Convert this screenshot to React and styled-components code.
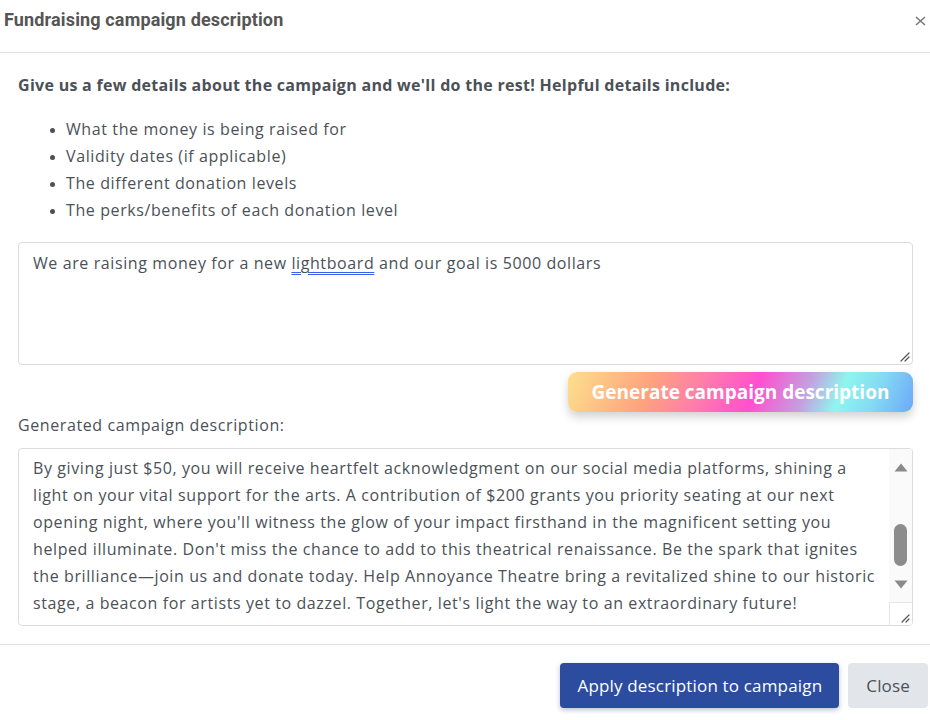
import React from "react";
import styled, { createGlobalStyle } from "styled-components";

const Global = createGlobalStyle`
  html, body { margin: 0; padding: 0; background: #fff; }
  body { font-family: "Open Sans", "Noto Sans", sans-serif; color: #4b5157; }
`;

const Modal = styled.div`
  width: 930px;
  height: 720px;
  background: #fff;
  display: flex;
  flex-direction: column;
  overflow: hidden;
`;

const Header = styled.div`
  display: flex;
  justify-content: space-between;
  align-items: flex-start;
  height: 53px;
  box-sizing: border-box;
  padding: 8px 3px 0 4px;
  border-bottom: 1px solid #dfe2e6;
`;

const Title = styled.h1`
  margin: 0;
  font-family: Roboto, "Liberation Sans", sans-serif;
  font-size: 18px;
  font-weight: 700;
  line-height: 24px;
  color: #555;
  letter-spacing: 0.15px;
`;

const CloseX = styled.button`
  border: 0;
  background: none;
  padding: 0;
  margin-top: 3px;
  width: 14px;
  height: 20px;
  display: flex;
  align-items: center;
  justify-content: center;
  color: #7a7a7a;
  cursor: pointer;
`;

const Body = styled.div`
  padding: 20px 17px 18px 18px;
  display: flex;
  flex-direction: column;
  border-bottom: 1px solid #dfe2e6;
`;

const Intro = styled.p`
  margin: 0;
  font-weight: 700;
  font-size: 16px;
  line-height: 24px;
  letter-spacing: 0.29px;
  color: #4b5157;
`;

const List = styled.ul`
  margin: 19px 0 0 0;
  padding: 0 0 0 48px;
  list-style: disc;
`;

const Item = styled.li`
  font-size: 16px;
  line-height: 27px;
  letter-spacing: 0.6px;
  &::marker { font-size: 13px; }
`;

const InputBox = styled.div`
  position: relative;
  margin-top: 18px;
  height: 123px;
  box-sizing: border-box;
  border: 1px solid #dcdcdc;
  border-radius: 4px;
  padding: 9px 14px;
  font-size: 16px;
  line-height: 22px;
  letter-spacing: 0.6px;
`;

const Marked = styled.span`
  text-decoration: underline double #3d5ee8;
  text-decoration-thickness: 1px;
  text-underline-offset: 3px;
`;

const Grip = styled.svg`
  position: absolute;
  right: 2px;
  bottom: 2px;
  width: 11px;
  height: 11px;
`;

const GenRow = styled.div`
  display: flex;
  justify-content: flex-end;
  margin-top: 7px;
`;

const GenButton = styled.button`
  width: 345px;
  height: 40px;
  border: 0;
  border-radius: 9px;
  background: linear-gradient(
    112deg,
    #fde08e 0%,
    #fea27d 24%,
    #ff7fa8 38%,
    #ff4fcf 54%,
    #c49fe0 68%,
    #8ef6ee 78%,
    #84d9f3 88%,
    #6ca9f8 100%
  );
  box-shadow: 0 5px 10px rgba(0, 0, 0, 0.18);
  color: #fff;
  font-family: "Open Sans", sans-serif;
  font-weight: 700;
  font-size: 19px;
  letter-spacing: 0;
  cursor: pointer;
  padding: 0;
`;

const Label = styled.div`
  margin-top: 2px;
  font-size: 16px;
  line-height: 22px;
  letter-spacing: 0.6px;
`;

const OutputBox = styled.div`
  margin-top: 12px;
  height: 178px;
  box-sizing: border-box;
  border: 1px solid #dcdcdc;
  border-radius: 4px;
  display: flex;
  overflow: hidden;
`;

const OutputText = styled.div`
  flex: 1;
  padding: 6px 14px 0 14px;
  overflow: hidden;
  font-size: 16px;
  line-height: 27px;
  letter-spacing: 0.6px;
`;

const Line = styled.div`
  white-space: nowrap;
`;

const ScrollCol = styled.div`
  width: 23px;
  display: flex;
  flex-direction: column;
  background: #fafafa;
`;

const Arrow = styled.div`
  height: ${(p) => p.h}px;
  display: flex;
  align-items: center;
  justify-content: center;
`;

const Track = styled.div`
  flex: 1;
  display: flex;
  flex-direction: column;
  align-items: center;
`;

const Thumb = styled.div`
  width: 13px;
  height: 42px;
  margin-top: ${(p) => p.top}px;
  border-radius: 7px;
  background: #8c8c8c;
`;

const Corner = styled.div`
  height: 23px;
  background: #fff;
  border-top: 1px solid #e6e6e6;
  border-left: 1px solid #e6e6e6;
  display: flex;
  align-items: flex-end;
  justify-content: flex-end;
  padding: 0 2px 2px 0;
  box-sizing: border-box;
`;

const Footer = styled.div`
  display: flex;
  justify-content: flex-end;
  gap: 9px;
  padding: 18px 2px 0 0;
`;

const Button = styled.button`
  height: 45px;
  border: 0;
  border-radius: 4px;
  font-family: "Open Sans", sans-serif;
  font-size: 17px;
  letter-spacing: 0.17px;
  cursor: pointer;
  padding: 0 ${(p) => (p.primary ? 17 : 18)}px;
  background: ${(p) => (p.primary ? "#2c4ca0" : "#e2e5e9")};
  color: ${(p) => (p.primary ? "#fff" : "#4b5157")};
  box-shadow: ${(p) => (p.primary ? "0 2px 5px rgba(30,50,120,0.3)" : "none")};
`;

const GripIcon = () => (
  <svg width="9" height="9" viewBox="0 0 9 9">
    <path d="M8 1 L1 8 M8 5 L5 8" stroke="#555" strokeWidth="1.2" strokeLinecap="round" />
  </svg>
);

const lines = [
  "By giving just $50, you will receive heartfelt acknowledgment on our social media platforms, shining a",
  "light on your vital support for the arts. A contribution of $200 grants you priority seating at our next",
  "opening night, where you'll witness the glow of your impact firsthand in the magnificent setting you",
  "helped illuminate. Don't miss the chance to add to this theatrical renaissance. Be the spark that ignites",
  "the brilliance\u2014join us and donate today. Help Annoyance Theatre bring a revitalized shine to our historic",
  "stage, a beacon for artists yet to dazzel. Together, let's light the way to an extraordinary future!",
];

export default function App() {
  return (
    <Modal>
      <Global />
      <Header>
        <Title>Fundraising campaign description</Title>
        <CloseX aria-label="Close">
          <svg width="11" height="10" viewBox="0 0 11 10">
            <path d="M1 1 L10 9 M10 1 L1 9" stroke="#7a7a7a" strokeWidth="1.6" />
          </svg>
        </CloseX>
      </Header>
      <Body>
        <Intro>Give us a few details about the campaign and we'll do the rest! Helpful details include:</Intro>
        <List>
          <Item>What the money is being raised for</Item>
          <Item>Validity dates (if applicable)</Item>
          <Item>The different donation levels</Item>
          <Item>The perks/benefits of each donation level</Item>
        </List>
        <InputBox>
          We are raising money for a new <Marked>lightboard</Marked> and our goal is 5000 dollars
          <Grip viewBox="0 0 11 11">
            <path d="M10 2 L2 10 M10 6 L6 10" stroke="#555" strokeWidth="1.2" strokeLinecap="round" />
          </Grip>
        </InputBox>
        <GenRow>
          <GenButton>Generate campaign description</GenButton>
        </GenRow>
        <Label>Generated campaign description:</Label>
        <OutputBox>
          <OutputText>
            {lines.map((l, i) => (
              <Line key={i}>{l}</Line>
            ))}
          </OutputText>
          <ScrollCol>
            <Arrow h={36}>
              <svg width="14" height="9" viewBox="0 0 14 9">
                <path d="M7 0.5 L13.5 8.5 L0.5 8.5 Z" fill="#8a8a8a" />
              </svg>
            </Arrow>
            <Track>
              <Thumb top={39} />
            </Track>
            <Arrow h={36}>
              <svg width="14" height="9" viewBox="0 0 14 9">
                <path d="M0.5 0.5 L13.5 0.5 L7 8.5 Z" fill="#8a8a8a" />
              </svg>
            </Arrow>
            <Corner>
              <GripIcon />
            </Corner>
          </ScrollCol>
        </OutputBox>
      </Body>
      <Footer>
        <Button primary>Apply description to campaign</Button>
        <Button>Close</Button>
      </Footer>
    </Modal>
  );
}
